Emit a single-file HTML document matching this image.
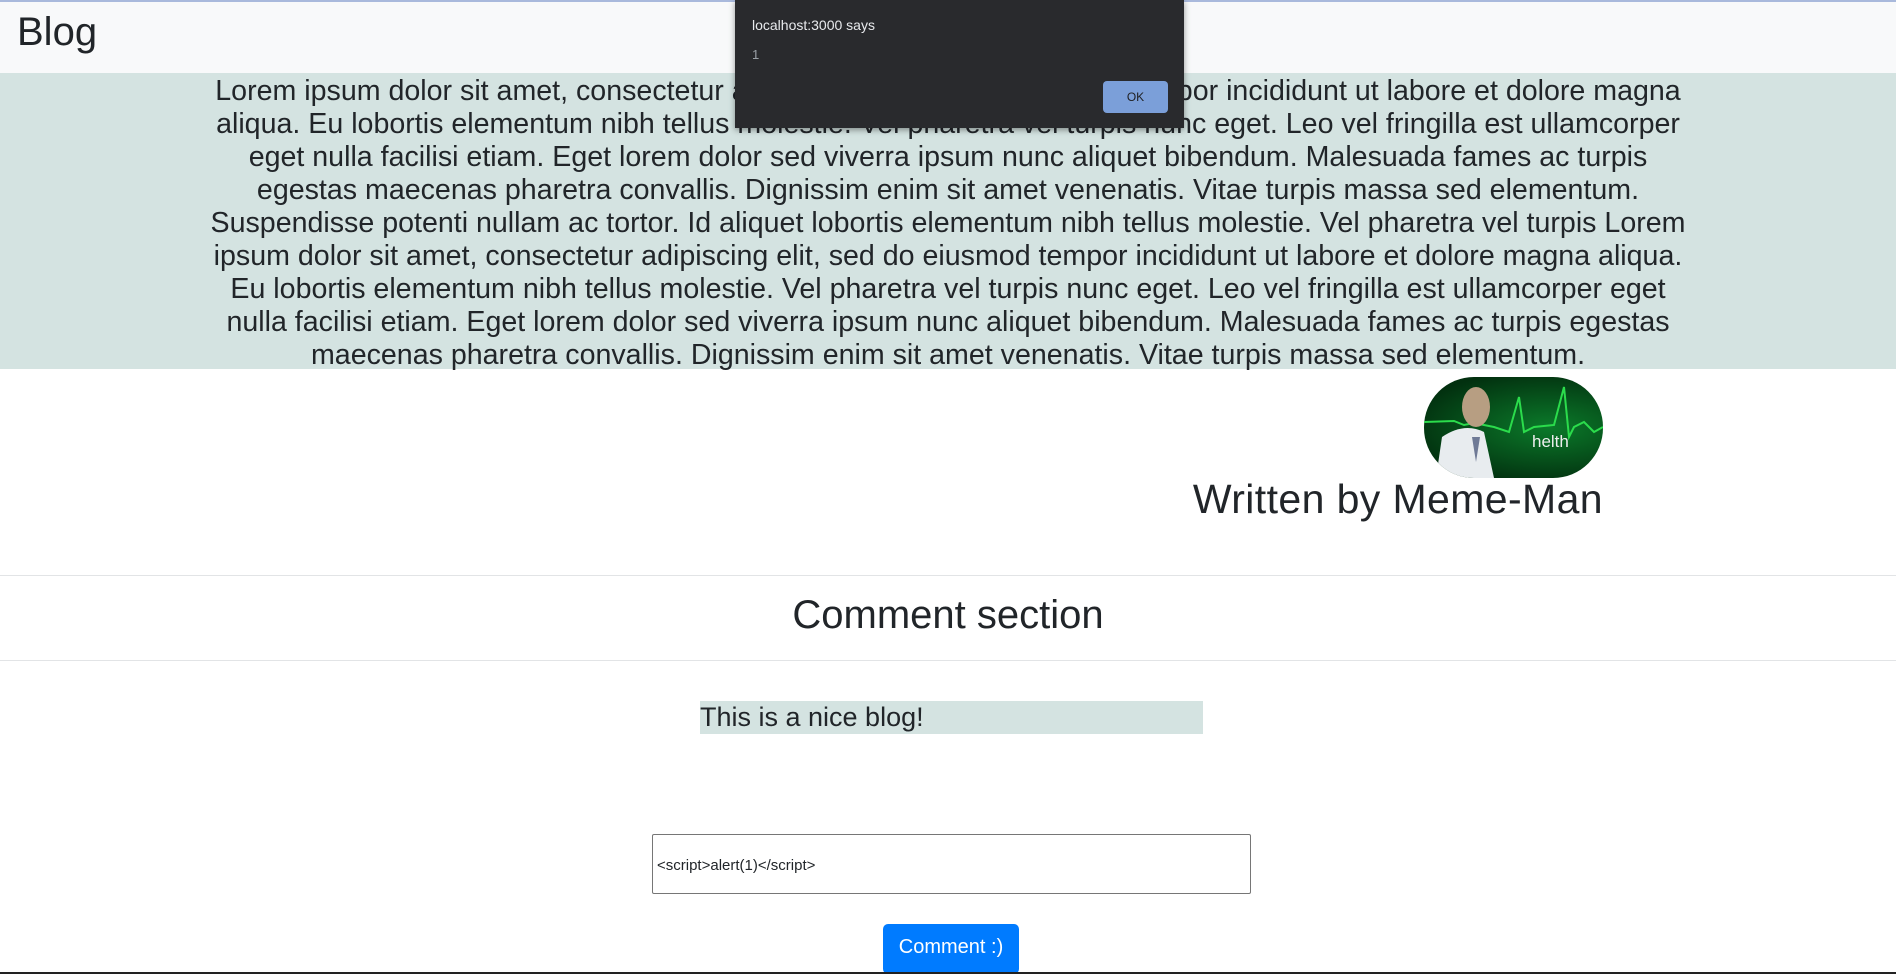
<!DOCTYPE html>
<html><head><meta charset="utf-8">
<style>
*{box-sizing:border-box;margin:0;padding:0}
body{width:1896px;height:974px;overflow:hidden;background:#fff;font-family:"Liberation Sans",sans-serif;color:#212529;position:relative}
.hdr{position:absolute;left:0;top:0;width:1896px;height:73px;background:#f8f9fa;border-top:2px solid #a9b9dc}
.hdr h1{position:absolute;left:17px;top:8px;font-size:40px;font-weight:500}
.lorem{position:absolute;left:0;top:73px;width:1896px;height:296px;background:#d4e3e1;text-align:center;font-size:28.6px;line-height:33px;padding-top:2px;white-space:nowrap}
.img{position:absolute;left:1424px;top:377px;width:179px;height:101px;border-radius:50px;overflow:hidden;background:radial-gradient(ellipse at 70% 50%,#0b7a2a,#02300f 80%)}
.wb{position:absolute;right:293px;top:476px;font-size:41px;font-weight:500;letter-spacing:0.4px}
.hr{position:absolute;left:0;width:1896px;height:1px;background:#e2e4e6}
.cs{position:absolute;left:0;width:1896px;text-align:center;top:593px;font-size:40px;font-weight:500}
.cm{position:absolute;left:700px;top:701px;width:503px;height:33px;background:#d4e3e1;font-size:27px;line-height:33px}
.inp{position:absolute;left:652px;top:834px;width:599px;height:60px;border:1px solid #767676;border-radius:2px;font-size:15px;padding:22px 4px}
.btn{position:absolute;left:883px;top:924px;width:136px;height:50px;background:#007bff;border-radius:5px;color:#fff;font-size:20px;text-align:center;line-height:46px}
.bot{position:absolute;left:0;top:972px;width:1896px;height:2px;background:#222}
.dlg{position:absolute;left:735px;top:0;width:449px;height:128px;background:#292a2d;box-shadow:0 2px 6px rgba(0,0,0,.4)}
.dlg .t{position:absolute;left:17px;top:17px;color:#e8eaed;font-size:14px}
.dlg .m{position:absolute;left:17px;top:47px;color:#9aa0a6;font-size:13px}
.dlg .ok{position:absolute;left:368px;top:81px;width:65px;height:32px;background:#7b9fd9;border-radius:4px;color:#202124;font-size:12px;text-align:center;line-height:32px}
</style></head><body>
<div class="hdr"><h1>Blog</h1></div>
<div class="lorem">Lorem ipsum dolor sit amet, consectetur adipiscing elit, sed do eiusmod tempor incididunt ut labore et dolore magna<br>aliqua. Eu lobortis elementum nibh tellus molestie. Vel pharetra vel turpis nunc eget. Leo vel fringilla est ullamcorper<br>eget nulla facilisi etiam. Eget lorem dolor sed viverra ipsum nunc aliquet bibendum. Malesuada fames ac turpis<br>egestas maecenas pharetra convallis. Dignissim enim sit amet venenatis. Vitae turpis massa sed elementum.<br>Suspendisse potenti nullam ac tortor. Id aliquet lobortis elementum nibh tellus molestie. Vel pharetra vel turpis Lorem<br>ipsum dolor sit amet, consectetur adipiscing elit, sed do eiusmod tempor incididunt ut labore et dolore magna aliqua.<br>Eu lobortis elementum nibh tellus molestie. Vel pharetra vel turpis nunc eget. Leo vel fringilla est ullamcorper eget<br>nulla facilisi etiam. Eget lorem dolor sed viverra ipsum nunc aliquet bibendum. Malesuada fames ac turpis egestas<br>maecenas pharetra convallis. Dignissim enim sit amet venenatis. Vitae turpis massa sed elementum.</div>
<div class="img"><svg width="179" height="101" viewBox="0 0 179 101">
<polyline points="0,45 30,44 40,48 50,46 70,50 85,55 95,20 100,55 110,50 130,48 140,10 145,60 150,50 160,45 170,55 179,50" fill="none" stroke="#2bdc4c" stroke-width="2"/>
<ellipse cx="52" cy="30" rx="14" ry="20" fill="#b79e82"/>
<path d="M12 101 L18 60 Q40 45 60 55 L70 101Z" fill="#e8ecef"/>
<path d="M48 60 L52 85 L56 60Z" fill="#6f7a96"/>
<text x="108" y="70" font-size="17" fill="#eee" font-family="Liberation Sans">helth</text>
</svg></div>
<div class="wb">Written by Meme-Man</div>
<div class="hr" style="top:575px"></div>
<div class="cs">Comment section</div>
<div class="hr" style="top:660px"></div>
<div class="cm">This is a nice blog!</div>
<div class="inp">&lt;script&gt;alert(1)&lt;/script&gt;</div>
<div class="btn">Comment :)</div>
<div class="bot"></div>
<div class="dlg"><div class="t">localhost:3000 says</div><div class="m">1</div><div class="ok">OK</div></div>
</body></html>
